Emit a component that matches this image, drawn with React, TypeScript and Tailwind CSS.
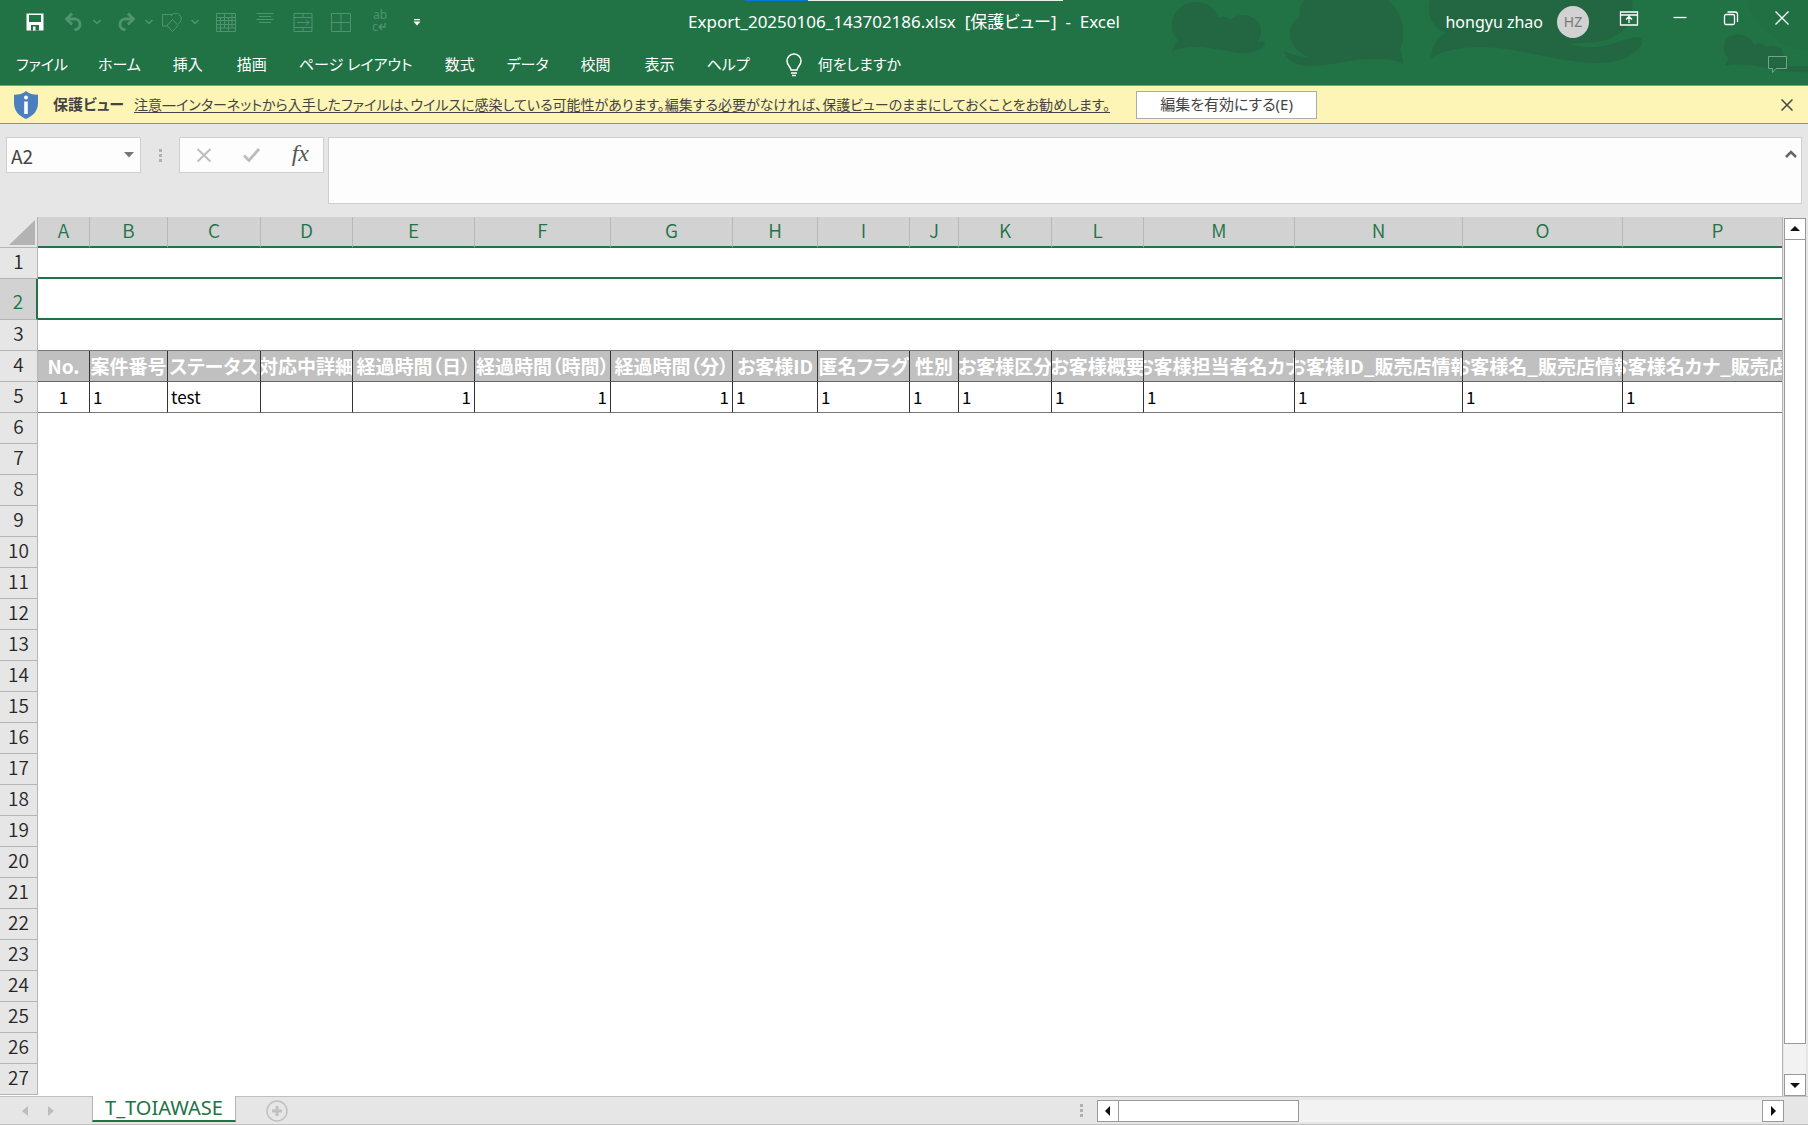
import { Fragment, type ReactNode } from "react";

interface Column {
  letter: string;
  width: number;
  title: string;
  value: string;
  align: string;
}

const COLUMNS: Column[] = [
  { letter: "A", width: 52, title: "No.", value: "1", align: "text-center" },
  { letter: "B", width: 78, title: "案件番号", value: "1", align: "text-left" },
  { letter: "C", width: 93, title: "ステータス", value: "test", align: "text-left" },
  { letter: "D", width: 92, title: "対応中詳細", value: "", align: "text-left" },
  { letter: "E", width: 122, title: "経過時間（日）", value: "1", align: "text-right" },
  { letter: "F", width: 136, title: "経過時間（時間）", value: "1", align: "text-right" },
  { letter: "G", width: 122, title: "経過時間（分）", value: "1", align: "text-right" },
  { letter: "H", width: 85, title: "お客様ID", value: "1", align: "text-left" },
  { letter: "I", width: 92, title: "匿名フラグ", value: "1", align: "text-left" },
  { letter: "J", width: 49, title: "性別", value: "1", align: "text-left" },
  { letter: "K", width: 93, title: "お客様区分", value: "1", align: "text-left" },
  { letter: "L", width: 92, title: "お客様概要", value: "1", align: "text-left" },
  { letter: "M", width: 151, title: "お客様担当者名カナ", value: "1", align: "text-left" },
  { letter: "N", width: 168, title: "お客様ID_販売店情報", value: "1", align: "text-left" },
  { letter: "O", width: 160, title: "お客様名_販売店情報", value: "1", align: "text-left" },
  { letter: "P", width: 190, title: "お客様名カナ_販売店情報", value: "1", align: "text-left" },
];

const ROWS = Array.from({ length: 27 }, (_, i) => i + 1);

const TABS = ["ファイル", "ホーム", "挿入", "描画", "ページ レイアウト", "数式", "データ", "校閲", "表示", "ヘルプ"];

export default function App() {
  return (
    <div className="flex h-screen flex-col overflow-hidden bg-[#e6e6e6] font-['Noto_Sans','Noto_Sans_CJK_JP',sans-serif] text-[15px] text-[#444444] [font-feature-settings:'palt']">
      <header className="relative bg-[#217346] text-white">
        <Clouds />
        <div className="absolute left-1/2 top-0 flex h-px w-[318px] -translate-x-[159px]">
          <div className="w-[63px] bg-[#0078d7]" />
          <div className="flex-1 bg-white/90" />
        </div>
        <TitleBar />
        <RibbonTabs />
      </header>
      <ProtectedBar />
      <FormulaBar />
      <main className="flex min-h-0 flex-1">
        <Sheet />
        <VerticalScroll />
      </main>
      <SheetTabs />
    </div>
  );
}

function TitleBar() {
  return (
    <div className="relative grid h-11 grid-cols-[1fr_auto_1fr] items-center">
      <div className="flex items-center pl-[25px] text-[#4f9470]">
        <IconButton label="上書き保存" className="text-white">
          <path d="M1.5 1.5h17v17h-17z" fill="currentColor" stroke="none" />
          <path d="M4 3h12v7H4zM6 13h8v5.500H6z" fill="#217346" stroke="none" />
          <path d="M8 14.500h2.500v4H8z" fill="currentColor" stroke="none" />
        </IconButton>
        <IconButton label="元に戻す" className="ml-[19px]">
          <path d="M8 1.500 2.500 7 8 12.500M3 7h8.500a5.500 5.500 0 0 1 1 10.500h-2" strokeWidth="2.800" />
        </IconButton>
        <Caret label="元に戻すの一覧" className="ml-2" />
        <IconButton label="やり直し" className="ml-3.5">
          <path d="m12 1.500 5.500 5.500-5.500 5.500M17 7H8.500a5.500 5.500 0 0 0-1 10.500h2" strokeWidth="2.800" />
        </IconButton>
        <Caret label="やり直しの一覧" className="ml-2" />
        <IconButton label="図形" className="ml-2">
          <path d="M6 14H.5V2.500h10M9 4a5.500 5.500 0 1 1 7.500 7.500M10.500 7.500l5.500 6-5.500 6-5.500-6z" />
        </IconButton>
        <Caret label="図形の一覧" className="ml-2" />
        <IconButton label="表" className="ml-4">
          <path d="M.5 1.500h19v18H.5zM.5 5.500h19M.5 8.500h19M.5 12.500h19M.5 16h19M4.500 5.500v14M8.500 1.500v14.500M12.500 5.500v14M16 1.500v14" />
        </IconButton>
        <IconButton label="上揃え" className="ml-[19px]">
          <path d="M1.500 1.500h17M4 4.500h12M1.500 7.500h17M4 10.500h12" />
        </IconButton>
        <IconButton label="セルの結合" className="ml-[18px]">
          <path d="M1 1.500h18v18H1zM1 5.500h18M1 15.500h18M10 1.500v4M10 15.500v4M4 10.500h12M13 7.500l3 3-3 3" />
        </IconButton>
        <IconButton label="罫線" className="ml-[18px]">
          <path d="M.5 1.500h19v18H.5zM10 1.500v18M.5 10.500h19" />
        </IconButton>
        <button aria-label="折り返し" className="ml-[21px] flex w-4 flex-col pb-0.5 text-xs leading-3">
          <span>ab</span>
          <span className="flex items-center">
            c
            <svg viewBox="0 0 8 8" className="h-2 w-2" fill="none" stroke="currentColor" strokeWidth="1.300">
              <path d="M7 0v4H1M4 1 1 4l3 3" />
            </svg>
          </span>
        </button>
        <button aria-label="クイック アクセス ツール バーのカスタマイズ" className="ml-[25px] text-white">
          <svg viewBox="0 0 8 8" className="h-2 w-2" fill="currentColor">
            <path d="M1 1h6v1.200H1zM.5 3.500h7L4 7.500z" />
          </svg>
        </button>
      </div>
      <h1 className="whitespace-pre text-[17px] leading-6">Export_20250106_143702186.xlsx  [保護ビュー]  -  Excel</h1>
      <div className="flex items-center justify-end">
        <span className="text-base">hongyu zhao</span>
        <span className="ml-3.5 mr-[30px] flex h-8 w-8 items-center justify-center rounded-full bg-[#d2d2d2] text-sm text-[#7a7a7a]">HZ</span>
        <div className="flex items-center gap-[31px] pb-2 pr-4">
          <IconButton label="リボンの表示オプション">
            <path d="M1.500 4h17v13h-17zM1.500 7h17M10 15V9M7 11.500l3-3 3 3" strokeWidth="1.300" />
          </IconButton>
          <IconButton label="最小化">
            <path d="M3.500 9.500h13" strokeWidth="1.300" />
          </IconButton>
          <IconButton label="元のサイズに戻す">
            <rect x="3.500" y="6.500" width="10" height="10" rx="1.500" strokeWidth="1.300" />
            <path d="M6.500 4h7.500a2.500 2.500 0 0 1 2.500 2.500v7.500" strokeWidth="1.300" />
          </IconButton>
          <IconButton label="閉じる">
            <path d="m3.500 3.500 13 13M16.500 3.500l-13 13" strokeWidth="1.300" />
          </IconButton>
        </div>
      </div>
    </div>
  );
}

function RibbonTabs() {
  return (
    <nav className="relative flex h-[41px] items-center gap-[30px] pl-4 pr-[21px]">
      {TABS.map((tab) => (
        <button key={tab} className="min-w-[34px] whitespace-nowrap">
          {tab}
        </button>
      ))}
      <button className="ml-1 flex items-center gap-3.5">
        <svg viewBox="0 0 20 24" className="h-6 w-5" fill="none" stroke="currentColor" strokeWidth="1.500">
          <path d="M7 17c0-3-4-4.500-4-9a7 7 0 0 1 14 0c0 4.500-4 6-4 9zM7 20h6M8 22.500h4" />
        </svg>
        何をしますか
      </button>
      <button aria-label="コメント" className="ml-auto text-[#6fa688]">
        <svg viewBox="0 0 19 17" className="h-[17px] w-[19px]" fill="none" stroke="currentColor">
          <path d="M.5.5h18v12H8l-3.500 4v-4h-4z" />
        </svg>
      </button>
    </nav>
  );
}

function ProtectedBar() {
  return (
    <div className="flex h-[39px] shrink-0 items-center whitespace-nowrap border-y border-[#b8930b] bg-[#fdf5b5] pl-3.5">
      <svg viewBox="0 0 24 28" className="h-7 w-6">
        <path d="M12 0c3 2.800 7 3.800 12 3.800V12c0 8-5 13-12 16C5 25 0 20 0 12V3.800c5 0 9-1 12-3.800z" fill="#4a80bd" />
        <circle cx="12" cy="6.500" r="2" fill="#fff" />
        <path d="M10.200 10.500h3.600v12.500h-3.600z" fill="#fff" />
      </svg>
      <strong className="ml-[15px]">保護ビュー</strong>
      <a href="#protected" className="ml-2.5 text-sm underline underline-offset-2">
        注意—インターネットから入手したファイルは、ウイルスに感染している可能性があります。編集する必要がなければ、保護ビューのままにしておくことをお勧めします。
      </a>
      <button className="ml-[26px] h-7 w-[181px] border border-[#ababab] bg-white">編集を有効にする(E)</button>
      <button aria-label="メッセージを閉じる" className="ml-auto mr-[15px]">
        <svg viewBox="0 0 12 12" className="h-3 w-3" fill="none" stroke="currentColor" strokeWidth="1.500">
          <path d="m.5.5 11 11M11.500.5l-11 11" />
        </svg>
      </button>
    </div>
  );
}

function FormulaBar() {
  return (
    <div className="flex shrink-0 items-start px-1.5 py-[13px]">
      <div className="flex h-9 w-[135px] items-center border border-[#d0d0d0] bg-[#fdfdfd]">
        <input
          aria-label="名前ボックス"
          defaultValue="A2"
          className="w-full min-w-0 flex-1 bg-transparent pl-1 pt-0.5 font-['Noto_Sans_CJK_JP',sans-serif] text-[19px] leading-6 outline-none"
        />
        <button aria-label="名前の一覧" className="pr-1.5">
          <svg viewBox="0 0 10 6" className="h-1.5 w-2.5" fill="#777">
            <path d="M0 0h10L5 5.500z" />
          </svg>
        </button>
      </div>
      <div className="flex h-9 w-[38px] flex-col items-center justify-center gap-0.5">
        <Dots />
      </div>
      <div className="flex h-9 w-[145px] items-center justify-between border border-[#d0d0d0] bg-[#fdfdfd] pl-4 pr-3.5">
        <button aria-label="キャンセル">
          <svg viewBox="0 0 16 16" className="h-4 w-4" fill="none" stroke="#bdbdbd" strokeWidth="2">
            <path d="m1.500 2 13 12.500M14.500 2l-13 12.500" />
          </svg>
        </button>
        <button aria-label="入力">
          <svg viewBox="0 0 17 16" className="h-4 w-[17px]" fill="none" stroke="#bdbdbd" strokeWidth="2.800">
            <path d="m1 8.500 5 5L16 2" />
          </svg>
        </button>
        <button aria-label="関数の挿入" className="pb-1 font-['Liberation_Serif',serif] text-2xl italic leading-6 text-[#555555]">
          fx
        </button>
      </div>
      <div className="ml-1 flex h-[67px] flex-1 items-start border border-[#d0d0d0] bg-[#fdfdfd]">
        <textarea aria-label="数式バー" className="h-full flex-1 resize-none bg-transparent outline-none" />
        <button aria-label="数式バーの折りたたみ" className="mr-1 mt-3">
          <svg viewBox="0 0 12 8" className="h-2 w-3" fill="none" stroke="#666" strokeWidth="2.500">
            <path d="m1 7 5-5 5 5" />
          </svg>
        </button>
      </div>
    </div>
  );
}

function Sheet() {
  return (
    <div className="min-w-0 flex-1 overflow-hidden border-r border-[#b4b4b4] bg-white font-['Noto_Sans_CJK_JP',sans-serif]">
      <table className="w-full min-w-[1813px] table-fixed border-separate border-spacing-0">
        <colgroup>
          <col className="w-[38px]" />
          {COLUMNS.map((c, i) => (
            <col key={c.letter} style={i < COLUMNS.length - 1 ? { width: c.width } : undefined} />
          ))}
        </colgroup>
        <thead>
          <tr className="h-[31px]">
            <th aria-label="すべて選択" className="border-b border-r border-[#b4b4b4] bg-[#e6e6e6] p-0">
              <svg viewBox="0 0 37 30" className="block h-[30px] w-[37px]">
                <path d="M35 3v25H9z" fill="#b3b3b3" />
              </svg>
            </th>
            {COLUMNS.map((c) => (
              <th
                key={c.letter}
                className="border-b-2 border-r border-b-[#217346] border-r-[#b8b8b8] bg-[#d2d2d2] px-0 pb-1 pt-0 text-[19px] font-[350] leading-6 text-[#217346]"
              >
                {c.letter}
              </th>
            ))}
          </tr>
        </thead>
        <tbody>
          {ROWS.map((row) => (
            <tr key={row} className={row === 2 ? "h-[41px]" : "h-[31px]"}>
              {row === 2 ? (
                <th className="border-b border-r-2 border-b-[#b4b4b4] border-r-[#217346] bg-[#d2d2d2] px-0 pb-1.5 pt-0 align-bottom text-[19px] font-[350] leading-6 text-[#217346]">
                  {row}
                </th>
              ) : (
                <th className="border-b border-r border-[#b4b4b4] bg-[#e6e6e6] px-0 pb-1 pt-0 text-[19px] font-[350] leading-6 text-[#262626]">
                  {row}
                </th>
              )}
              <RowCells row={row} />
            </tr>
          ))}
        </tbody>
      </table>
    </div>
  );
}

function RowCells({ row }: { row: number }) {
  if (row === 4) {
    return COLUMNS.map((c) => (
      <td key={c.letter} className="overflow-hidden border-b border-r border-b-[#666666] border-r-[#333333] bg-[#c0c0c0] p-0">
        <div className="flex justify-center whitespace-nowrap text-[19px] font-bold leading-7 text-white">{c.title}</div>
      </td>
    ));
  }
  if (row === 5) {
    return COLUMNS.map((c) => (
      <td
        key={c.letter}
        className={`border-b border-r border-b-[#777777] border-r-[#333333] px-[3px] py-0 text-[17px] leading-7 text-black ${c.align}`}
      >
        {c.value}
      </td>
    ));
  }
  // selection outline runs along the bottom of rows 1 and 2
  if (row <= 2) return <td colSpan={COLUMNS.length} className="border-b-2 border-[#217346] p-0" />;
  if (row === 3) return <td colSpan={COLUMNS.length} className="border-b border-[#777777] p-0" />;
  return <td colSpan={COLUMNS.length} className="p-0" />;
}

function VerticalScroll() {
  return (
    <div className="mt-px flex w-[25px] flex-col pl-px pr-0.5">
      <ScrollButton label="上へスクロール" path="M5 12h10l-5-5z" />
      <div className="-mt-px min-h-0 flex-1 border border-[#999999] bg-white" />
      <div className="h-[30px] bg-[#f2f2f2]" />
      <ScrollButton label="下へスクロール" path="M5 8h10l-5 5z" />
    </div>
  );
}

function SheetTabs() {
  return (
    <footer className="flex h-[29px] shrink-0 border-b border-t border-[#c0c0c0]">
      <div className="flex w-[92px] items-center gap-5 pl-[22px]">
        <button aria-label="前のシート">
          <svg viewBox="0 0 6 10" className="h-2.5 w-1.5" fill="#bdbdbd">
            <path d="M6 0v10L0 5z" />
          </svg>
        </button>
        <button aria-label="次のシート">
          <svg viewBox="0 0 6 10" className="h-2.5 w-1.5" fill="#bdbdbd">
            <path d="M0 0v10l6-5z" />
          </svg>
        </button>
      </div>
      <button className="-mt-px h-[26px] w-36 border-x border-b-2 border-x-[#b4b4b4] border-b-[#217346] bg-white text-xl leading-6 text-[#217346]">
        T_TOIAWASE
      </button>
      <button aria-label="新しいシート" className="ml-[30px]">
        <svg viewBox="0 0 22 22" className="h-[22px] w-[22px]" fill="none" stroke="#c0c0c0" strokeWidth="1.500">
          <circle cx="11" cy="11" r="10" />
          <path d="M11 6v10M6 11h10" strokeWidth="3" />
        </svg>
      </button>
      <div className="ml-auto flex w-[728px] pr-6">
        <div className="flex w-[17px] flex-col justify-center gap-0.5">
          <Dots />
        </div>
        <div className="flex flex-1 items-center">
          <ScrollButton label="左へスクロール" path="M12 5v10L7 10z" />
          <div className="-ml-px h-[22px] w-[181px] border border-[#999999] bg-white" />
          <div className="h-[22px] flex-1 bg-[#f2f2f2]" />
          <ScrollButton label="右へスクロール" path="M8 5v10l5-5z" />
        </div>
      </div>
    </footer>
  );
}

function IconButton({ label, className = "", children }: { label: string; className?: string; children: ReactNode }) {
  return (
    <button aria-label={label} className={`shrink-0 ${className}`}>
      <svg viewBox="0 0 20 20" className="h-5 w-5" fill="none" stroke="currentColor">
        {children}
      </svg>
    </button>
  );
}

function Caret({ label, className }: { label: string; className: string }) {
  return (
    <button aria-label={label} className={className}>
      <svg viewBox="0 0 10 10" className="h-2.5 w-2.5" fill="none" stroke="currentColor" strokeWidth="1.500">
        <path d="m1.500 3 3.500 3.500L8.500 3" />
      </svg>
    </button>
  );
}

function ScrollButton({ label, path }: { label: string; path: string }) {
  return (
    <button aria-label={label} className="h-[22px] w-[22px] shrink-0 border border-[#999999] bg-white">
      <svg viewBox="0 0 20 20" className="h-5 w-5" fill="#111">
        <path d={path} />
      </svg>
    </button>
  );
}

function Dots() {
  return (
    <Fragment>
      {[0, 1, 2].map((i) => (
        <span key={i} className="h-[3px] w-[3px] bg-[#b0b0b0]" />
      ))}
    </Fragment>
  );
}

// Faint cloud pattern behind the window controls
function Clouds() {
  return (
    <svg viewBox="0 0 648 85" className="absolute right-0 top-0 h-[85px] w-[648px]" fill="#226741">
      <path d="M12 27C12 12 22 2 36 2c12 0 20 7 22 16 4-2 9-2 12 2 5-5 12-6 19-4 8 3 12 8 12 15 0 5-1 8-4 11 3 0 5-1 8 0-1 7-8 10-20 11-18 0-30-6-48-6-10 0-18 1-25 5 1-5 3-9 6-12-4-3-6-8-6-13z" />
      <path d="M145 0h83c10 8 16 20 15 36 0 5-1 10-3 14 2 4 3 9 3 14-8-5-20-5-33-5-26 1-44 8-63 7-14-1-22-8-23-15 6 3 14 6 24 6-12-6-18-13-18-23 0-8 3-13 10-18-1-6 0-11 5-16z" />
      <path d="M270 0h202c2 14-2 26-12 33-10 7-22 10-36 10-6 0-10 0-14 1 12 4 26 4 38 1 12-3 20-7 29-8 9 0 6 9-2 15-14 12-36 12-56 10-34-4-66-15-99-15-20 0-38 4-49 11 1-11 6-20 14-25-14-8-18-18-15-33z" />
      <path d="M565 66c1-4 2-5 4-7-7-5-7-16-1-21 8-7 21-4 26 7 4-3 9-2 12 2 8-4 17 0 17 7 5 4 6 8 4 12h21v6c-34 2-58-12-83-6z" />
      <path d="M588 0h60v50c-20 0-28-6-34-14-8-2-26-18-26-36z" opacity=".25" />
    </svg>
  );
}
